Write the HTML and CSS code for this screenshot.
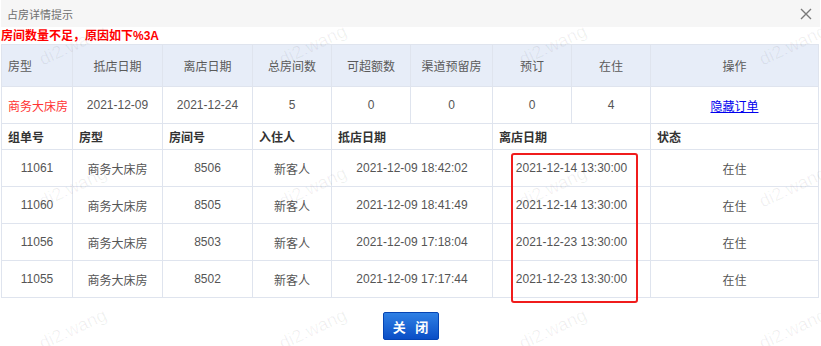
FILE: index.html
```html
<!DOCTYPE html>
<html lang="zh-CN">
<head>
  <meta charset="UTF-8">
  <title>占房详情提示</title>
  <link rel="stylesheet" href="styles.css">
</head>
<body>
  <div class="dialog">
    <div class="title-bar">
      <span class="title">占房详情提示</span>
      <svg class="close" width="12" height="12" viewBox="0 0 12 12">
        <path d="M1 1 L11 11 M11 1 L1 11" stroke="#7a7a7a" stroke-width="1.4" fill="none"/>
      </svg>
    </div>

    <div class="message">房间数量不足，原因如下%3A</div>

    <table class="grid">
      <colgroup>
        <col style="width: 71px">
        <col style="width: 90px">
        <col style="width: 90px">
        <col style="width: 79px">
        <col style="width: 79px">
        <col style="width: 82px">
        <col style="width: 79px">
        <col style="width: 79px">
        <col>
      </colgroup>
      <tr class="head">
        <th class="left">房型</th>
        <th>抵店日期</th>
        <th>离店日期</th>
        <th>总房间数</th>
        <th>可超额数</th>
        <th>渠道预留房</th>
        <th>预订</th>
        <th>在住</th>
        <th>操作</th>
      </tr>
      <tr class="row">
        <td class="left red">商务大床房</td>
        <td>2021-12-09</td>
        <td>2021-12-24</td>
        <td>5</td>
        <td>0</td>
        <td>0</td>
        <td>0</td>
        <td>4</td>
        <td><a href="#">隐藏订单</a></td>
      </tr>
      <tr class="sub-head">
        <th>组单号</th>
        <th>房型</th>
        <th>房间号</th>
        <th>入住人</th>
        <th colspan="2">抵店日期</th>
        <th colspan="2">离店日期</th>
        <th>状态</th>
      </tr>
      <tr class="row">
        <td>11061</td>
        <td>商务大床房</td>
        <td>8506</td>
        <td>新客人</td>
        <td colspan="2">2021-12-09 18:42:02</td>
        <td colspan="2">2021-12-14 13:30:00</td>
        <td>在住</td>
      </tr>
      <tr class="row">
        <td>11060</td>
        <td>商务大床房</td>
        <td>8505</td>
        <td>新客人</td>
        <td colspan="2">2021-12-09 18:41:49</td>
        <td colspan="2">2021-12-14 13:30:00</td>
        <td>在住</td>
      </tr>
      <tr class="row">
        <td>11056</td>
        <td>商务大床房</td>
        <td>8503</td>
        <td>新客人</td>
        <td colspan="2">2021-12-09 17:18:04</td>
        <td colspan="2">2021-12-23 13:30:00</td>
        <td>在住</td>
      </tr>
      <tr class="row">
        <td>11055</td>
        <td>商务大床房</td>
        <td>8502</td>
        <td>新客人</td>
        <td colspan="2">2021-12-09 17:17:44</td>
        <td colspan="2">2021-12-23 13:30:00</td>
        <td>在住</td>
      </tr>
    </table>

    <div class="actions">
      <button class="btn-close">关 闭</button>
    </div>
  </div>

  <!-- annotation drawn over the screenshot -->
  <div class="mark"></div>

  <!-- watermark -->
  <div class="watermarks">
    <span class="wm" style="left: 40px; top: 45px">di2.wang</span>
    <span class="wm" style="left: 280px; top: 45px">di2.wang</span>
    <span class="wm" style="left: 520px; top: 45px">di2.wang</span>
    <span class="wm" style="left: 760px; top: 45px">di2.wang</span>
    <span class="wm" style="left: 40px; top: 187px">di2.wang</span>
    <span class="wm" style="left: 280px; top: 187px">di2.wang</span>
    <span class="wm" style="left: 520px; top: 187px">di2.wang</span>
    <span class="wm" style="left: 760px; top: 187px">di2.wang</span>
    <span class="wm" style="left: 40px; top: 329px">di2.wang</span>
    <span class="wm" style="left: 280px; top: 329px">di2.wang</span>
    <span class="wm" style="left: 520px; top: 329px">di2.wang</span>
    <span class="wm" style="left: 760px; top: 329px">di2.wang</span>
  </div>
</body>
</html>
```

FILE: styles.css
```css
html, body {
  margin: 0;
  padding: 0;
  background-color: #fff;
  font-family: 'Liberation Sans', 'Noto Sans CJK SC', sans-serif;
  font-size: 12px;
  color: #555;
}

.dialog {
  padding: 0 1px;
}

.title-bar {
  display: flex;
  align-items: center;
  justify-content: space-between;
  height: 27px;
  padding: 0 8px 0 6px;
  background-color: #f6f6f6;
}

.title {
  font-size: 11px;
  color: #6f6f6f;
}

.message {
  padding-top: 1px;
  line-height: 16px;
  font-weight: bold;
  color: #f00;
}

.grid {
  width: 818px;
  table-layout: fixed;
  border-collapse: collapse;
}

.grid th,
.grid td {
  border: 1px solid #dfe4ee;
  padding: 0 6px;
  text-align: center;
  white-space: nowrap;
  font-weight: normal;
}

.grid .left {
  text-align: left;
}

.head {
  height: 42px;
  background-color: #e7edf8;
}

.head th {
  color: #5a5a5a;
}

.row {
  height: 37px;
}

.sub-head {
  height: 26px;
}

.sub-head th {
  text-align: left;
  font-weight: bold;
  color: #333;
}

.red {
  color: #f33;
}

.grid a {
  color: #00e;
}

.actions {
  display: flex;
  justify-content: center;
  padding-top: 14px;
}

.btn-close {
  width: 56px;
  height: 28px;
  padding: 0;
  border: 1px solid #0544b3;
  border-radius: 2px;
  background: linear-gradient(#2f80e4, #0a4ec6);
  color: #fff;
  font-family: inherit;
  font-size: 13px;
  font-weight: bold;
  letter-spacing: 3px;
  text-indent: 3px;
}

.mark {
  position: absolute;
  left: 511px;
  top: 153px;
  width: 123px;
  height: 146px;
  border: 2px solid #f01c1c;
  border-radius: 3px;
}

.watermarks {
  position: absolute;
  inset: 0;
  overflow: hidden;
  pointer-events: none;
}

.wm {
  position: absolute;
  font-size: 18px;
  color: rgba(0, 0, 0, 0.06);
  transform: translate(-3px, -10px) rotate(-25deg);
  transform-origin: center;
  white-space: nowrap;
}
```
